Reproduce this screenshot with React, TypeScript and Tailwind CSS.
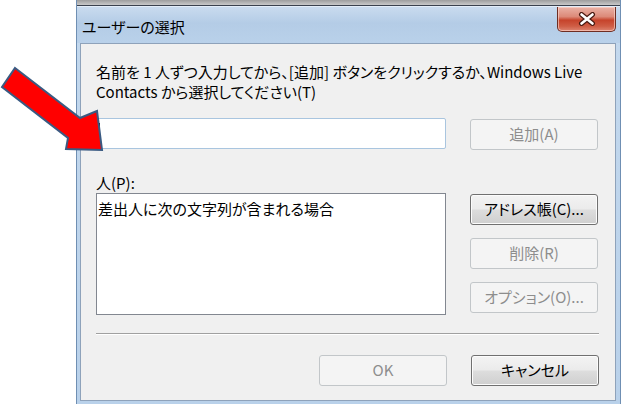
import React from "react";

const font = "font-['Noto_Sans_CJK_JP','Noto_Sans_CJK_SC',sans-serif] [font-feature-settings:'palt']";

function Btn({ label, enabled = false, className = "" }: { label: string; enabled?: boolean; className?: string }) {
  return enabled ? (
    <div
      className={`h-[31px] w-[128px] rounded-[3px] border border-[#707070] bg-[linear-gradient(to_bottom,#f3f3f3_0%,#ebebeb_48%,#dddddd_52%,#cfcfcf_100%)] shadow-[inset_0_0_0_1px_#fcfcfc] flex items-center justify-center text-[15px] text-black ${className}`}
    >
      {label}
    </div>
  ) : (
    <div
      className={`h-[31px] w-[128px] rounded-[3px] border border-[#c2c6c9] bg-[#f4f4f4] flex items-center justify-center text-[15px] text-[#8d8d8d] ${className}`}
    >
      {label}
    </div>
  );
}

export default function App() {
  return (
    <div className={`relative w-[623px] h-[404px] overflow-hidden bg-white ${font}`}>
      {/* window */}
      <div className="ml-[76px] w-[545px] h-[404px] flex flex-col border-l border-r border-[#6f8fb3] bg-[linear-gradient(to_bottom,#c4d9ee,#b9d1ea)]">
        {/* top strip from window behind */}
        <div className="h-[5px] bg-[linear-gradient(to_bottom,#9d9d9d,#c9c9c9)]" />
        <div className="h-[1px] bg-[#3a414d]" />
        {/* title bar */}
        <div className="h-[37px] flex justify-between bg-[linear-gradient(to_bottom,#c9dbee_0%,#b4cce6_45%,#b9d1ea_100%)] border-t border-[#e3edf8]">
          <div className="pl-[5px] pt-[10px] text-[15px] leading-[20px] text-black">ユーザーの選択</div>
          <div className="mr-[4px] h-[25px] w-[59px] rounded-b-[5px] border border-t-0 border-[#6e2d22] bg-[linear-gradient(to_bottom,#eab2a6_0%,#dc8a79_40%,#c6432b_55%,#cf5d45_80%,#dd8572_100%)] shadow-[inset_0_0_0_1px_rgba(255,220,210,0.6)] flex items-center justify-center">
            <svg width="18" height="14" viewBox="0 0 18 14">
              <path d="M3.5 2.5 L14.5 11.5 M14.5 2.5 L3.5 11.5" stroke="#4a1a12" strokeWidth="5" strokeLinecap="round" />
              <path d="M3.5 2.5 L14.5 11.5 M14.5 2.5 L3.5 11.5" stroke="#ffffff" strokeWidth="2.6" strokeLinecap="round" />
            </svg>
          </div>
        </div>
        {/* content panel */}
        <div className="flex-1 ml-[3px] mr-[4px] mb-[3px] border border-[#8ea2ba] bg-[#f0f0f0] pl-[15px] pt-[18px] flex flex-col text-[15px] text-black">
          <div className="leading-[20px] w-[505px]">
            名前を 1 人ずつ入力してから、[追加] ボタンをクリックするか、Windows Live
            <br />
            Contacts から選択してください(T)
          </div>
          <div className="mt-[16px] flex items-start gap-[24px]">
            <div className="relative h-[31px] w-[350px] rounded-[2px] border border-[#a9c5df] bg-white">
              <div className="absolute left-[2px] top-[4px] h-[21px] w-[1px] bg-black" />
            </div>
            <Btn label="追加(A)" className="mt-[1px] h-[30px]" />
          </div>
          <div className="mt-[23px] leading-[20px]">人(P):</div>
          <div className="flex items-start gap-[24px]">
            <div className="h-[122px] w-[350px] border border-[#828790] bg-white pl-[1px] pt-[5px] leading-[20px]">
              差出人に次の文字列が含まれる場合
            </div>
            <div className="mt-[1px] flex flex-col gap-[13px]">
              <Btn label="アドレス帳(C)..." enabled />
              <Btn label="削除(R)" />
              <Btn label="オプション(O)..." />
            </div>
          </div>
          <div className="mt-[18px] w-[503px] h-[1px] bg-[#a0a0a0] shadow-[0_1px_0_#ffffff]" />
          <div className="mt-[21px] w-[503px] flex justify-end gap-[24px]">
            <Btn label="OK" />
            <Btn label="キャンセル" enabled />
          </div>
        </div>
      </div>

      {/* red arrow annotation */}
      <svg className="absolute left-0 top-0 pointer-events-none" width="623" height="404" viewBox="0 0 623 404">
        <polygon
          points="15,68 80,118 97,111 102,150 66,149 68,138 2,87"
          fill="#ff0000"
          stroke="#3a5a82"
          strokeWidth="2"
          strokeLinejoin="miter"
        />
      </svg>
    </div>
  );
}
